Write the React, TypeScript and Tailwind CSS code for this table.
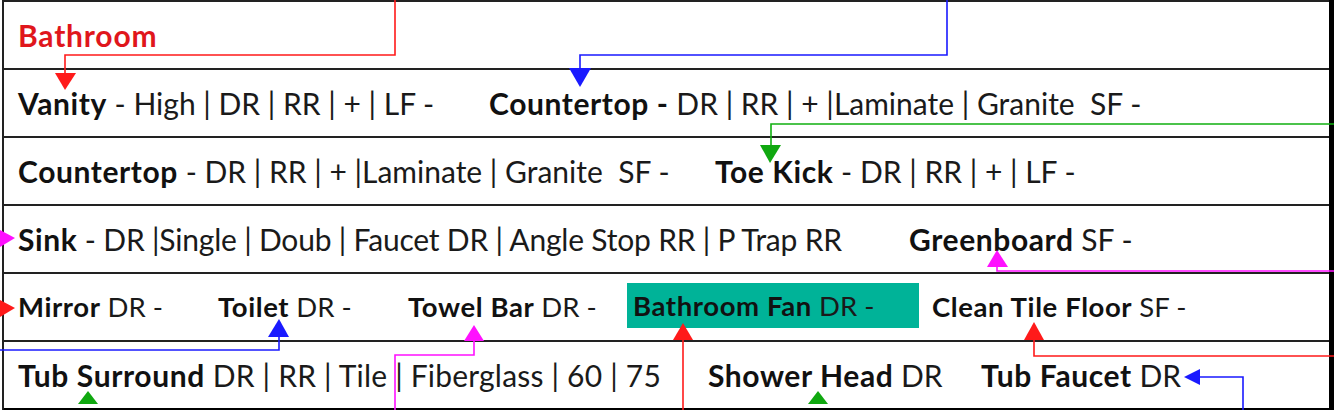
import React from "react";

const font = { fontFamily: "Lato, 'Open Sans', 'Noto Sans', sans-serif" };

function B({ children }: { children: React.ReactNode }) {
  return <span className="font-bold text-[#111] tracking-[0.6px]">{children}</span>;
}

function Arrows() {
  return (
    <svg
      className="absolute inset-0 pointer-events-none"
      width={1334}
      height={410}
      viewBox="0 0 1334 410"
    >
      <g fill="none" strokeWidth={1.6}>
        <polyline points="395,0 395,55 65,55 65,74" stroke="#ff1a1a" />
        <polyline points="947,0 947,55 580,55 580,70" stroke="#1a1aff" />
        <polyline points="1334,124 771,124 771,147" stroke="#10b010" />
        <polyline points="1334,271 997,271 997,266" stroke="#ff10ff" />
        <polyline points="0,350 279,350 279,337" stroke="#1a1aff" />
        <polyline points="395,410 395,355 474,355 474,341" stroke="#ff10ff" />
        <polyline points="683,410 683,338" stroke="#ff1a1a" />
        <polyline points="1334,356 1034,356 1034,340" stroke="#ff1a1a" />
        <polyline points="1243,410 1243,377 1198,377" stroke="#1a1aff" />
      </g>
      <polygon points="55,73 76,73 65,90" fill="#ff1a1a" />
      <polygon points="569,68 591,68 580,87" fill="#1a1aff" />
      <polygon points="760,145 781,145 770,163" fill="#10a810" />
      <polygon points="0,230 0,247 15,238" fill="#ff10ff" />
      <polygon points="987,267 1008,267 997,250" fill="#ff10ff" />
      <polygon points="0,300 0,317 15,308" fill="#ff1a1a" />
      <polygon points="268,337 289,337 279,319" fill="#1a1aff" />
      <polygon points="464,341 484,341 474,325" fill="#ff10ff" />
      <polygon points="673,340 693,340 683,323" fill="#ff1a1a" />
      <polygon points="1024,340 1044,340 1034,322" fill="#ff1a1a" />
      <polygon points="78,404 98,404 88,391" fill="#10a810" />
      <polygon points="808,404 828,404 818,391" fill="#10a810" />
      <polygon points="1200,369 1200,385 1184,377" fill="#1a1aff" />
    </svg>
  );
}

export default function App() {
  const row = "flex items-center h-[68px] border-t-2 border-[#222] pl-[14px] whitespace-pre";
  return (
    <div className="relative w-[1334px] h-[410px] bg-white text-[30px] leading-none text-[#1a1a1a] overflow-hidden" style={font}>
      <div className="ml-[2px] border-l-2 border-r-[5px] border-b-[6px] border-[#222] border-r-black border-b-black">
        {/* title row */}
        <div className={row}>
          <span className="font-bold text-[#e0161c] tracking-[0.8px]">Bathroom</span>
        </div>

        <div className={row}>
          <div className="w-[471px]">
            <B>Vanity</B> - High | DR | RR | + | LF -
          </div>
          <div>
            <B>Countertop -</B> DR | RR | + |Laminate | Granite  SF -
          </div>
        </div>

        <div className={row}>
          <div className="w-[697px]">
            <B>Countertop</B> - DR | RR | + |Laminate | Granite  SF -
          </div>
          <div>
            <B>Toe Kick</B> - DR | RR | + | LF -
          </div>
        </div>

        <div className={row}>
          <div className="w-[891px] tracking-[-0.2px]">
            <B>Sink</B> - DR |Single | Doub | Faucet DR | Angle Stop RR | P Trap RR
          </div>
          <div>
            <B>Greenboard</B> SF -
          </div>
        </div>

        <div className={`${row} text-[27.5px]`}>
          <div className="w-[200px]">
            <B>Mirror</B> DR -
          </div>
          <div className="w-[190px]">
            <B>Toilet</B> DR -
          </div>
          <div className="w-[219px]">
            <B>Towel Bar</B> DR -
          </div>
          <div className="w-[292px] h-[45px] bg-[#00b398] pl-[6px] flex items-center mt-[-3px]">
            <B>Bathroom Fan</B> DR -
          </div>
          <div className="pl-[13px]">
            <B>Clean Tile Floor</B> SF -
          </div>
        </div>

        <div className={`${row} h-[64px]`}>
          <div className="w-[690px] tracking-[0.2px]">
            <B>Tub Surround</B> DR | RR | Tile | Fiberglass | 60 | 75
          </div>
          <div className="w-[273px]">
            <B>Shower Head</B> DR
          </div>
          <div>
            <B>Tub Faucet</B> DR
          </div>
        </div>
      </div>
      <Arrows />
    </div>
  );
}
